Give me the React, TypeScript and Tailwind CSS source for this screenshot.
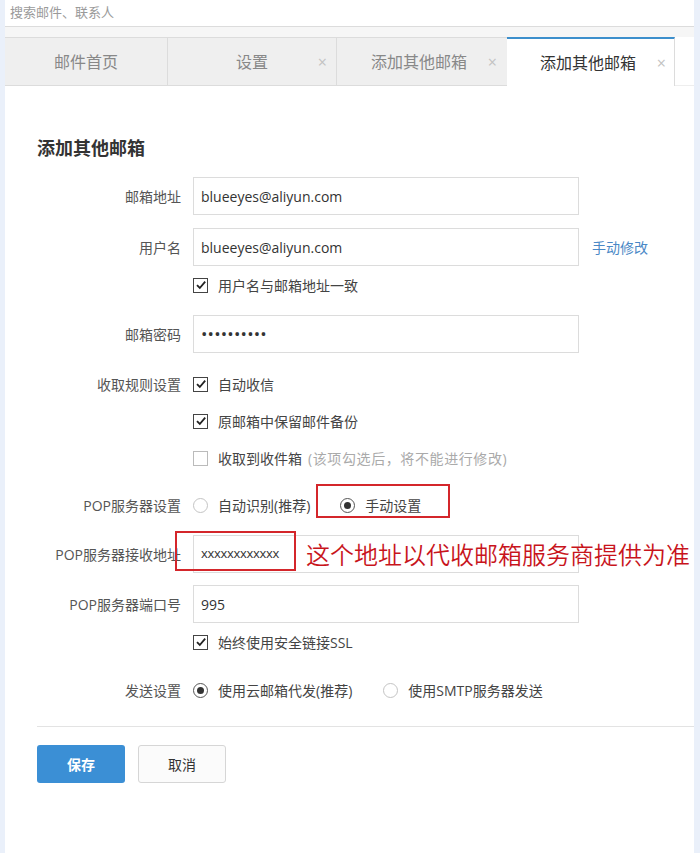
import React from "react";

const FONT = '"Open Sans", "Noto Sans CJK SC", "Noto Sans", sans-serif';

function Check({ on }: { on: boolean }) {
  return (
    <span
      className={`flex h-[15px] w-[15px] shrink-0 items-center justify-center border bg-white ${
        on ? "border-[#444]" : "border-[#bbb]"
      }`}
    >
      {on && (
        <svg width="12" height="12" viewBox="0 0 12 12">
          <path d="M2 6.2 L4.8 9 L10.2 2.6" fill="none" stroke="#222" strokeWidth="1.8" />
        </svg>
      )}
    </span>
  );
}

function Radio({ on }: { on: boolean }) {
  return (
    <span
      className={`flex h-[15px] w-[15px] shrink-0 items-center justify-center rounded-full border bg-white ${
        on ? "border-[#555]" : "border-[#c4c4c4]"
      }`}
    >
      {on && <span className="h-[7px] w-[7px] rounded-full bg-[#333]" />}
    </span>
  );
}

function Label({ children }: { children: React.ReactNode }) {
  return (
    <div className="w-[176px] shrink-0 pr-0 text-right text-[14px] text-[#555]">{children}</div>
  );
}

function Input({ value, mono }: { value: string; mono?: boolean }) {
  return (
    <div
      className={`flex h-[38px] w-[386px] items-center border border-[#dcdcdc] bg-white px-[7px] ${
        mono ? "text-[13px] tracking-[-0.3px]" : "text-[14px]"
      } text-[#333]`}
    >
      {value}
    </div>
  );
}

export default function App() {
  return (
    <div className="flex h-[853px] w-[700px] bg-[#eaf0fa]" style={{ fontFamily: FONT }}>
      <div className="ml-[5px] mr-[6px] flex flex-1 flex-col bg-white">
        {/* search */}
        <div className="flex h-[27px] items-center border-b border-[#dcdcdc] pl-[5px] text-[13px] text-[#9a9a9a]">
          搜索邮件、联系人
        </div>
        <div className="h-[10px] bg-[#f6f6f6]" />
        {/* tabs */}
        <div className="flex h-[49px]">
          <div className="flex w-[163px] items-center justify-center border-y border-r border-[#dcdcdc] bg-[#efefef] text-[16px] text-[#888]">
            邮件首页
          </div>
          <div className="relative flex w-[169px] items-center justify-center border-y border-r border-[#dcdcdc] bg-[#efefef] text-[16px] text-[#888]">
            设置
            <span className="absolute right-[9px] text-[16px] text-[#c2c2c2]">×</span>
          </div>
          <div className="relative flex w-[170px] items-center border-y border-[#dcdcdc] bg-[#efefef] pl-[34px] text-[16px] text-[#888]">
            添加其他邮箱
            <span className="absolute right-[10px] text-[16px] text-[#c2c2c2]">×</span>
          </div>
          <div className="relative flex w-[168px] items-center border-r border-t-2 border-[#dcdcdc] border-t-[#3d8fcc] bg-white pl-[33px] text-[16px] text-[#333]">
            添加其他邮箱
            <span className="absolute right-[8px] text-[16px] text-[#c2c2c2]">×</span>
          </div>
          <div className="flex-1 border-b border-[#eeeeee]" />
        </div>

        {/* content */}
        <div className="flex flex-col pt-[49px]">
          <div className="pl-[32px] text-[18px] font-bold leading-[26px] text-[#333]">添加其他邮箱</div>

          <div className="mt-[16px] flex items-center gap-[12px]">
            <Label>邮箱地址</Label>
            <Input value="blueeyes@aliyun.com" />
          </div>
          <div className="mt-[13px] flex items-center gap-[12px]">
            <Label>用户名</Label>
            <Input value="blueeyes@aliyun.com" />
            <span className="ml-[1px] text-[14px] text-[#4a88c6]">手动修改</span>
          </div>
          <div className="mt-[7px] flex h-[24px] items-center gap-[12px]">
            <Label>{""}</Label>
            <div className="flex items-center gap-[10px] text-[14px] text-[#444]">
              <Check on />
              用户名与邮箱地址一致
            </div>
          </div>
          <div className="mt-[18px] flex items-center gap-[12px]">
            <Label>邮箱密码</Label>
            <div className="flex h-[38px] w-[386px] items-center border border-[#dcdcdc] bg-white px-[7px] text-[17px] tracking-[0.2px] text-[#333]">
              ••••••••••
            </div>
          </div>

          <div className="mt-[19px] flex h-[24px] items-center gap-[12px]">
            <Label>收取规则设置</Label>
            <div className="flex items-center gap-[10px] text-[14px] text-[#444]">
              <Check on />
              自动收信
            </div>
          </div>
          <div className="mt-[13px] flex h-[24px] items-center gap-[12px]">
            <Label>{""}</Label>
            <div className="flex items-center gap-[10px] text-[14px] text-[#444]">
              <Check on />
              原邮箱中保留邮件备份
            </div>
          </div>
          <div className="mt-[13px] flex h-[24px] items-center gap-[12px]">
            <Label>{""}</Label>
            <div className="flex items-center gap-[10px] text-[14px] text-[#444]">
              <Check on={false} />
              <span>
                收取到收件箱<span className="ml-[6px] tracking-[0.6px] text-[#aaa]">(该项勾选后，将不能进行修改)</span>
              </span>
            </div>
          </div>

          <div className="mt-[23px] flex h-[24px] items-center gap-[12px]">
            <Label>POP服务器设置</Label>
            <div className="flex items-center gap-[10px] text-[14px] text-[#444]">
              <Radio on={false} />
              自动识别(推荐)
            </div>
            <div className="relative ml-[18px] flex items-center gap-[10px] text-[14px] text-[#444]">
              <span className="absolute left-[-24px] top-[-11px] h-[34px] w-[134px] border-2 border-[#d4262b]" />
              <Radio on />
              手动设置
            </div>
          </div>

          <div className="relative mt-[18px] flex items-center gap-[12px]">
            <Label>POP服务器接收地址</Label>
            <Input value="xxxxxxxxxxxx" mono />
            <span className="absolute left-[170px] top-[-4px] h-[40px] w-[121px] border-2 border-[#d4262b]" />
            <span
              className="absolute left-[301px] top-[4px] text-[24px] leading-[30px] text-[#c8141c]"
              style={{ fontFamily: '"Noto Sans CJK SC", sans-serif', fontWeight: 350 }}
            >
              这个地址以代收邮箱服务商提供为准
            </span>
          </div>

          <div className="mt-[12px] flex items-center gap-[12px]">
            <Label>POP服务器端口号</Label>
            <Input value="995" />
          </div>
          <div className="mt-[7px] flex h-[24px] items-center gap-[12px]">
            <Label>{""}</Label>
            <div className="flex items-center gap-[10px] text-[14px] text-[#444]">
              <Check on />
              始终使用安全链接SSL
            </div>
          </div>

          <div className="mt-[24px] flex h-[24px] items-center gap-[12px]">
            <Label>发送设置</Label>
            <div className="flex items-center gap-[10px] text-[14px] text-[#444]">
              <Radio on />
              使用云邮箱代发(推荐)
            </div>
            <div className="ml-[19px] flex items-center gap-[10px] text-[14px] text-[#444]">
              <Radio on={false} />
              使用SMTP服务器发送
            </div>
          </div>

          <div className="ml-[32px] mt-[24px] h-px bg-[#e3e3e3]" />

          <div className="ml-[32px] mt-[18px] flex gap-[13px]">
            <button className="flex h-[38px] w-[88px] items-center justify-center rounded-[3px] bg-[#3b8fd5] text-[14px] font-bold text-white">
              保存
            </button>
            <button className="flex h-[38px] w-[88px] items-center justify-center rounded-[3px] border border-[#d6d6d6] bg-[#fbfbfb] text-[14px] text-[#333]">
              取消
            </button>
          </div>
        </div>
      </div>
    </div>
  );
}
